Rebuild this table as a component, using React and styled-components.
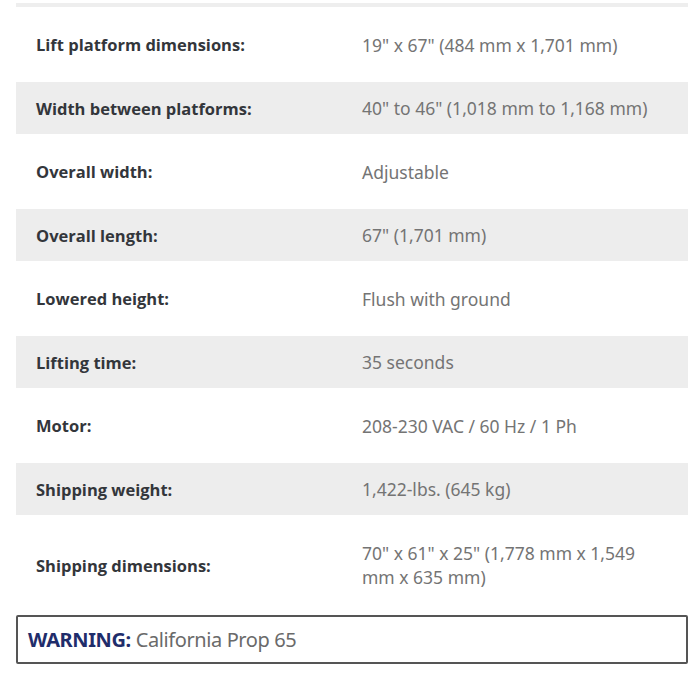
import React from 'react';
import styled, { createGlobalStyle } from 'styled-components';

const GlobalStyle = createGlobalStyle`
  body {
    margin: 0;
    background: #fff;
  }
`;

const specs = [
  ['Lift platform dimensions:', '19" x 67" (484 mm x 1,701 mm)'],
  ['Width between platforms:', '40" to 46" (1,018 mm to 1,168 mm)'],
  ['Overall width:', 'Adjustable'],
  ['Overall length:', '67" (1,701 mm)'],
  ['Lowered height:', 'Flush with ground'],
  ['Lifting time:', '35 seconds'],
  ['Motor:', '208-230 VAC / 60 Hz / 1 Ph'],
  ['Shipping weight:', '1,422-lbs. (645 kg)'],
  ['Shipping dimensions:', '70" x 61" x 25" (1,778 mm x 1,549 mm x 635 mm)'],
];

const App = () => {
  return (
    <Page>
      <GlobalStyle />
      <TopStrip />
      <SpecTable>
        {specs.map(([label, value], i) => (
          <Row key={label} shaded={i % 2 === 1} tall={i === specs.length - 1}>
            <Label>{label}</Label>
            <Value>{value}</Value>
          </Row>
        ))}
      </SpecTable>
      <Warning>
        <strong>WARNING:</strong> California Prop 65
      </Warning>
    </Page>
  );
};

const Page = styled.div`
  width: 672px;
  padding: 3px 0 0 16px;
`;

const TopStrip = styled.div`
  height: 4px;
  background: #eeeeee;
`;

const SpecTable = styled.div`
  display: flex;
  flex-direction: column;
`;

const Row = styled.div.withConfig({
  shouldForwardProp: (p) => p !== 'shaded' && p !== 'tall',
})`
  display: grid;
  grid-template-columns: 346px 290px;
  align-items: center;
  height: ${(p) => (p.tall ? '100px' : p.shaded ? '52px' : '75px')};
  padding-left: 20px;
  background: ${(p) => (p.shaded ? '#ededed' : '#fff')};
  box-sizing: border-box;
`;

const Label = styled.div`
  font-family: 'Open Sans', 'Liberation Sans', sans-serif;
  font-weight: 700;
  font-size: 16.5px;
  color: #33363b;
`;

const Value = styled.div`
  margin-left: -20px;
  font-family: 'Noto Sans', 'Liberation Sans', sans-serif;
  font-size: 17.5px;
  line-height: 24px;
  color: #747474;
`;

const Warning = styled.div`
  height: 49px;
  box-sizing: border-box;
  border: 2px solid #555;
  border-radius: 2px;
  display: flex;
  align-items: center;
  padding-left: 10px;
  font-family: 'Noto Sans', 'Liberation Sans', sans-serif;
  font-size: 20px;
  letter-spacing: -0.4px;
  color: #6a6a6a;

  strong {
    color: #1f2d6b;
    font-weight: 700;
    margin-right: 5px;
  }
`;

export default App;
